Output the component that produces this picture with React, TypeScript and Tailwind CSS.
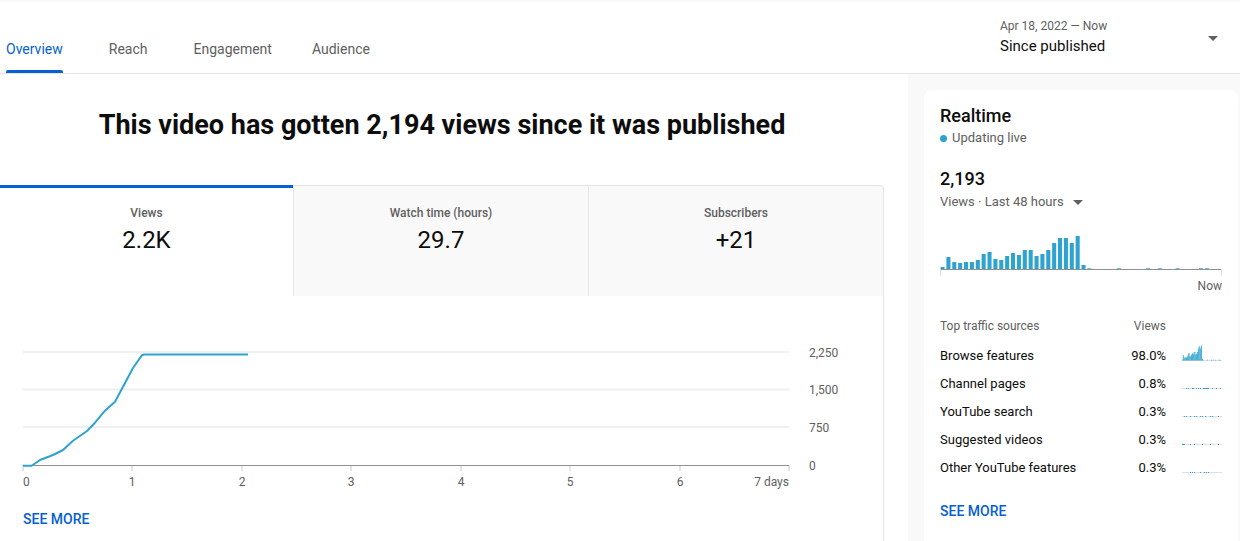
import React from "react";

const BLUE = "#2fa3cf";

const rtBars = [2, 12, 7, 6, 7, 7, 9, 15, 17, 10, 9, 13, 16, 14, 19, 19, 13, 15, 19, 26, 31, 31, 26, 33, 4];
const allBars: number[] = [...rtBars];
for (let i = allBars.length; i < 48; i++) allBars.push(i % 5 === 0 || i % 7 === 2 ? 0.7 : 0);

const linePts: [number, number][] = [
  [23, 465.7], [31.7, 465.7], [40, 460], [53, 455], [63, 450], [73, 440.7], [87, 431], [95, 422.7],
  [105, 410.7], [115, 401.7], [123, 386.7], [133, 368], [142, 355.2], [144, 354.5], [248, 354.5],
];

function MainChart() {
  const oy = 330;
  const xs = [23, 132, 242, 351, 461, 570, 680, 789];
  const labels = ["0", "1", "2", "3", "4", "5", "6", "7 days"];
  const grid = [352, 389.5, 427];
  const ylabels = ["2,250", "1,500", "750", "0"];
  const d = linePts.map((p, i) => `${i === 0 ? "M" : "L"}${p[0]},${p[1] - oy}`).join(" ");
  return (
    <svg width={908} height={170} className="block" style={{ fontFamily: "Roboto, sans-serif" }}>
      {grid.map((g) => (
        <rect key={g} x={23} y={g - oy - 1} width={766} height={2} fill="#f0f0f0" />
      ))}
      {xs.map((x) => (
        <rect key={x} x={x - 1} y={465 - oy} width={2} height={6} fill="#e5e5e5" />
      ))}
      <rect x={23} y={465 - oy} width={766} height={1} fill="#909090" />
      <path d={d} fill="none" stroke={BLUE} strokeWidth={2} strokeLinejoin="round" />
      {xs.map((x, i) => (
        <text
          key={x}
          x={i === 0 ? 23 : x}
          y={486 - oy}
          fontSize={12}
          fill="#606060"
          textAnchor={i === 0 ? "start" : i === 7 ? "end" : "middle"}
        >
          {labels[i]}
        </text>
      ))}
      {[352, 389.5, 427, 465].map((y, i) => (
        <text key={y} x={809} y={y - oy + 4.5} fontSize={12} fill="#606060">
          {ylabels[i]}
        </text>
      ))}
    </svg>
  );
}

function RealtimeBars() {
  const w = 282;
  const step = w / 48;
  return (
    <svg width={282} height={48} className="block">
      {allBars.map((h, i) =>
        h > 0 ? (
          <rect key={i} x={i * step + 0.5} y={41 - h} width={step - 1.8} height={h} fill={BLUE} />
        ) : null
      )}
      <rect x={0} y={41} width={282} height={1} fill="#909090" />
      <rect x={0} y={41} width={1} height={7} fill="#e0e0e0" />
      <rect x={281} y={41} width={1} height={7} fill="#e0e0e0" />
    </svg>
  );
}

function Spark({ kind }: { kind: number }) {
  const step = 40 / 48;
  if (kind === 0) {
    return (
      <svg width={40} height={20} className="block">
        <rect x={0} y={16} width={40} height={1} fill="#e0e0e0" />
        {allBars.map((h, i) =>
          h > 0 ? (
            <rect key={i} x={i * step} y={16.5 - Math.max(h * 0.45, 0.8)} width={step} height={Math.max(h * 0.45, 0.8)} fill={BLUE} />
          ) : null
        )}
      </svg>
    );
  }
  const spots = [
    [],
    [4, 6, 10, 11, 14, 16, 18, 21, 22, 23, 24, 25, 26, 30, 34, 38],
    [2, 4, 8, 12, 14, 18, 20, 23, 28, 30, 36],
    [0, 1, 2, 8, 12, 20, 28, 36],
    [8, 10, 12, 18, 22, 24, 26],
  ][kind];
  return (
    <svg width={40} height={20} className="block">
      <rect x={0} y={16} width={40} height={1} fill="#e0e0e0" />
      {spots.map((s) => (
        <rect key={s} x={s} y={16} width={1} height={1} fill={BLUE} />
      ))}
    </svg>
  );
}

function Caret({ className }: { className?: string }) {
  return (
    <svg width={10} height={5} viewBox="0 0 10 5" className={className}>
      <path d="M0 0 L10 0 L5 5 Z" fill="#606060" />
    </svg>
  );
}

export default function App() {
  const roboto = { fontFamily: "Roboto, 'Liberation Sans', sans-serif" };
  const tabs = [
    { label: "Overview", active: true, ml: "ml-[6px]" },
    { label: "Reach", active: false, ml: "ml-[46px]" },
    { label: "Engagement", active: false, ml: "ml-[46px]" },
    { label: "Audience", active: false, ml: "ml-[40px]" },
  ];
  const metrics = [
    { label: "Views", value: "2.2K", active: true },
    { label: "Watch time (hours)", value: "29.7", active: false },
    { label: "Subscribers", value: "+21", active: false },
  ];
  const sources = [
    ["Browse features", "98.0%"],
    ["Channel pages", "0.8%"],
    ["YouTube search", "0.3%"],
    ["Suggested videos", "0.3%"],
    ["Other YouTube features", "0.3%"],
  ];
  return (
    <div className="w-[1240px] h-[541px] overflow-hidden bg-white text-[#0d0d0d]" style={roboto}>
      {/* Header */}
      <div className="h-[74px] border-b border-[#e5e5e5] flex border-t-2 border-t-[#f9f9f9]">
        <div className="flex items-end h-full">
          {tabs.map((t) => (
            <div key={t.label} className={`${t.ml} flex flex-col items-stretch`}>
              <div
                className={`text-[14px] leading-[20px] font-normal ${t.active ? "text-[#065fd4]" : "text-[#606060]"}`}
              >
                {t.label}
              </div>
              <div className={`mt-[11px] h-[3px] rounded-t-[2px] ${t.active ? "bg-[#065fd4]" : "bg-transparent"}`} />
            </div>
          ))}
        </div>
        <div className="ml-auto w-[240px] flex items-start">
          <div className="pt-[16px] flex-1">
            <div className="text-[12px] leading-[16px] text-[#606060]">Apr 18, 2022 — Now</div>
            <div className="mt-[2px] text-[15px] leading-[20px] text-[#0d0d0d]">Since published</div>
          </div>
          <Caret className="mt-[34px] mr-[22px]" />
        </div>
      </div>

      {/* Body */}
      <div className="flex">
        <div className="w-[908px] shrink-0 bg-white">
          <h1 className="pt-[33px] text-center text-[27px] leading-[36px] font-bold text-[#0d0d0d] w-[884px]">
            This video has gotten 2,194 views since it was published
          </h1>
          <div className="mt-[42px] w-[884px] border-r border-[#e5e5e5] rounded-tr-[4px] h-[400px]">
            <div className="grid grid-cols-[293px_295px_1fr] h-[111px]">
              {metrics.map((m, i) => (
                <div
                  key={m.label}
                  className={`flex flex-col items-center ${
                    m.active
                      ? "bg-white border-t-[3px] border-[#065fd4] pt-[17px]"
                      : `bg-[#f9f9f9] border-t border-[#e5e5e5] pt-[19px] ${i > 0 ? "border-l" : ""} ${i === 2 ? "rounded-tr-[4px]" : ""}`
                  }`}
                >
                  <div className="text-[12px] leading-[16px] text-[#606060] font-medium">{m.label}</div>
                  <div className="mt-[3px] text-[24px] leading-[32px] text-[#0d0d0d]">{m.value}</div>
                </div>
              ))}
            </div>
            <div className="mt-[34px]">
              <MainChart />
            </div>
            <div className="mt-[9px] pl-[23px] text-[14px] leading-[20px] font-medium text-[#065fd4]">SEE MORE</div>
          </div>
        </div>

        <div className="flex-1 bg-[#f9f9f9] pl-[16px] pt-[16px] pr-[2px] h-[467px]">
          <div className="bg-white rounded-[8px] px-[16px] pt-[14px] h-[480px]">
            <div className="text-[18px] leading-[24px] font-medium">Realtime</div>
            <div className="mt-[1px] flex items-center text-[13px] leading-[18px] text-[#606060]">
              <span className="w-[7px] h-[7px] rounded-full bg-[#2fa3cf] mr-[5px]" />
              Updating live
            </div>
            <div className="mt-[20px] text-[18px] leading-[24px] font-medium">2,193</div>
            <div className="mt-[2px] flex items-center text-[13px] leading-[18px] text-[#606060]">
              Views · Last 48 hours
              <Caret className="ml-[9px]" />
            </div>
            <div className="mt-[17px]">
              <RealtimeBars />
            </div>
            <div className="mt-[2px] text-right text-[12px] leading-[16px] text-[#606060]">Now</div>
            <div className="mt-[24px] flex text-[12px] leading-[16px] text-[#606060]">
              <div className="flex-1">Top traffic sources</div>
              <div className="mr-[56px]">Views</div>
            </div>
            <div className="mt-[8px]">
              {sources.map((s, i) => (
                <div key={s[0]} className="h-[28px] flex items-center text-[13px] text-[#0d0d0d]">
                  <div className="flex-1">{s[0]}</div>
                  <div>{s[1]}</div>
                  <div className="ml-[16px] mt-[-4px]">
                    <Spark kind={i} />
                  </div>
                </div>
              ))}
            </div>
            <div className="mt-[19px] text-[14px] leading-[20px] font-medium text-[#065fd4]">SEE MORE</div>
          </div>
        </div>
      </div>
    </div>
  );
}
